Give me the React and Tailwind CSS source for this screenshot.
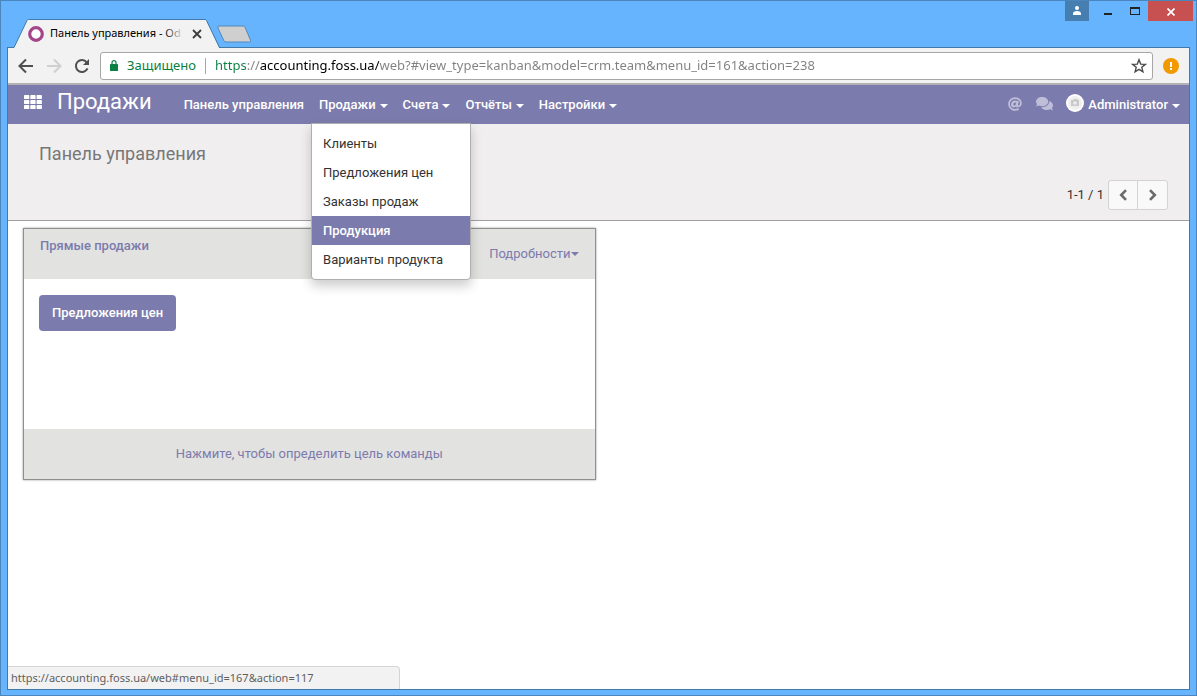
import { useState } from "react";
import clsx from "clsx";
import { FaAt, FaComments } from "react-icons/fa";

const PAGE_URL = "https://accounting.foss.ua/web?#view_type=kanban&model=crm.team&menu_id=161&action=238";

const MENUS = [
  { id: "dashboard", label: "Панель управления" },
  {
    id: "sales",
    label: "Продажи",
    items: ["Клиенты", "Предложения цен", "Заказы продаж", "Продукция", "Варианты продукта"],
  },
  { id: "invoices", label: "Счета", items: [] },
  { id: "reports", label: "Отчёты", items: [] },
  { id: "settings", label: "Настройки", items: [] },
];

function Caret({ className }) {
  return (
    <svg viewBox="0 0 8 4" className={clsx("h-1 w-2 shrink-0", className)} fill="currentColor" aria-hidden="true">
      <path d="M0 0h8L4 4z" />
    </svg>
  );
}

function BrowserTab() {
  return (
    <div className="relative z-10 -mb-px flex h-[29px] w-[206px] items-center pl-3.5 pr-[18px]">
      <svg viewBox="0 0 206 29" className="absolute inset-0 h-full w-full" aria-hidden="true">
        <path d="M0 29V28.5L13 1.5Q13.500 .5 14.500 .5H191Q192 .5 192.500 1.500L205 28.500V29z" fill="#f2f2f2" />
        <path d="M0 28.500L13 1.500Q13.500 .5 14.500 .5H191Q192 .5 192.500 1.500L205.500 28.500" fill="none" stroke="#4179a8" />
      </svg>
      <svg viewBox="0 0 16 16" className="relative h-4 w-4 shrink-0" aria-hidden="true">
        <circle cx="8" cy="8" r="6.300" fill="#fff" stroke="#a24689" strokeWidth="3.200" />
      </svg>
      <span className="relative ml-1.5 w-[134px] whitespace-nowrap text-[11px] text-black">
        Панель управления - Od
        <span className="absolute inset-y-0 right-0 w-5 bg-linear-to-r from-transparent to-[#f2f2f2]" />
      </span>
      <button type="button" aria-label="Закрыть вкладку" className="relative ml-2 text-[#3c3c3c]">
        <svg viewBox="0 0 10 10" className="h-2.5 w-2.5" stroke="currentColor" strokeWidth="1.8">
          <path d="M1 1l8 8M9 1L1 9" />
        </svg>
      </button>
    </div>
  );
}

function WindowButtons() {
  return (
    <div className="ml-auto flex h-5 self-start">
      <button type="button" aria-label="Профиль" className="flex w-6 justify-center bg-[#477eb0] pt-[5px]">
        <svg viewBox="0 0 8 9" className="h-[9px] w-2" fill="#fff">
          <circle cx="4" cy="2" r="2" />
          <path d="M0 9V7.500Q0 5 4 5T8 7.500V9z" />
        </svg>
      </button>
      <button type="button" aria-label="Свернуть" className="flex w-[38px] items-center justify-center pt-1.5">
        <span className="h-0.5 w-2 bg-[#222]" />
      </button>
      <button type="button" aria-label="Развернуть" className="flex w-[13px] items-center justify-end">
        <span className="h-2 w-[10px] border border-t-2 border-[#222]" />
      </button>
      <button type="button" aria-label="Закрыть" className="ml-2 flex w-[45px] items-center justify-center bg-[#c75050]">
        <svg viewBox="0 0 8 8" className="mt-0.5 h-2 w-2" stroke="#fff" strokeWidth="1.7">
          <path d="M.5 .5l7 7M7.500 .5l-7 7" />
        </svg>
      </button>
    </div>
  );
}

function AddressBar() {
  return (
    <div className="flex h-[35px] shrink-0 items-center bg-[#f2f2f2] pl-2.5 pr-2.5">
      <button type="button" aria-label="Назад" className="text-[#4f4f52]">
        <svg viewBox="0 0 16 16" className="h-4 w-4" fill="none" stroke="currentColor" strokeWidth="2">
          <path d="M15 8H2M8 1.500L1.500 8L8 14.500" />
        </svg>
      </button>
      <button type="button" aria-label="Вперёд" className="ml-3 text-[#cfcfcf]">
        <svg viewBox="0 0 16 16" className="h-4 w-4" fill="none" stroke="currentColor" strokeWidth="2">
          <path d="M1 8h13M8 1.500L14.500 8L8 14.500" />
        </svg>
      </button>
      <button type="button" aria-label="Обновить" className="ml-3 text-[#4f4f52]">
        <svg viewBox="0 0 16 16" className="h-4 w-4" fill="none" stroke="currentColor" strokeWidth="2">
          <path d="M13.500 10.300A6 6 0 1 1 12.700 4.300" />
          <path d="M15 1v6H9z" fill="currentColor" stroke="none" />
        </svg>
      </button>
      <div className="ml-2.5 flex h-7 min-w-0 flex-1 items-center rounded-[3px] border border-[#a6a6a6] bg-white pl-[9px] pr-[5px] text-[13px]">
        <svg viewBox="0 0 8 11" className="h-[11px] w-2" aria-hidden="true">
          <path d="M2 5V2.700a2 2 0 0 1 4 0V5" fill="none" stroke="#0b8043" strokeWidth="1.200" />
          <rect y="4" width="8" height="7" rx=".6" fill="#0b8043" />
        </svg>
        <span className="ml-[9px] text-[#0b8043]">Защищено</span>
        <span className="ml-[9px] h-4 w-px bg-[#a6a6a6]" />
        <input
          type="text"
          aria-label="Адрес"
          defaultValue={PAGE_URL}
          className="ml-[9px] min-w-0 flex-1 bg-[linear-gradient(to_right,#0b8043_31px,#808080_31px,#808080_45px,#000_45px,#000_164px,#808080_164px)] bg-clip-text text-transparent outline-none"
        />
        <button type="button" aria-label="Добавить в закладки">
          <svg viewBox="0 0 16 16" className="h-4 w-4" fill="none" stroke="#4a4a4a" strokeWidth="1.400">
            <path d="M8 1.800l1.700 4.300 4.600.3-3.500 2.900 1.100 4.500L8 11.300l-3.900 2.500 1.100-4.500L1.700 6.400l4.600-.3z" />
          </svg>
        </button>
      </div>
      <button type="button" aria-label="Меню браузера" className="ml-2.5">
        <svg viewBox="0 0 16 16" className="h-4 w-4">
          <circle cx="8" cy="8" r="8" fill="#f29900" />
          <path d="M7 4h2v5H7zM7 10h2v2H7z" fill="#fff" />
        </svg>
      </button>
    </div>
  );
}

function NavMenu({ menu, open, onToggle }) {
  const [active, setActive] = useState("Продукция");

  return (
    <li className="relative">
      <button type="button" onClick={onToggle} className="flex h-[39px] items-center font-medium text-white">
        {menu.label}
        {menu.items && <Caret className="ml-1 mt-[3px]" />}
      </button>
      {open && (
        <ul className="absolute -left-2 top-full z-20 -mt-px w-40 rounded-b border border-[#afafaf] bg-white py-[5px] shadow-[0_6px_12px_rgba(0,0,0,0.2)]">
          {menu.items.map((item) => (
            <li key={item}>
              <a
                href="#"
                onMouseEnter={() => setActive(item)}
                className={clsx(
                  "block whitespace-nowrap px-[11px] leading-[29px]",
                  active === item ? "bg-[#7c7bad] font-medium text-white" : "text-[#333]"
                )}
              >
                {item}
              </a>
            </li>
          ))}
        </ul>
      )}
    </li>
  );
}

function Navbar() {
  const [openMenu, setOpenMenu] = useState("sales");

  return (
    <nav className="flex h-[39px] shrink-0 items-center bg-[#7c7bad] pl-4 pr-[9px] text-white">
      <button type="button" aria-label="Приложения" className="-mt-1.5">
        <svg viewBox="0 0 18 14" className="h-3.5 w-[18px]" fill="currentColor">
          {[0, 5, 10].map((y) =>
            [0, 6.3, 12.6].map((x) => <rect key={`${x}-${y}`} x={x} y={y} width="5.3" height="4.1" rx=".7" />)
          )}
        </svg>
      </button>
      <span className="-mt-1.5 ml-[15px] text-[22px]">Продажи</span>
      <ul className="ml-8 flex gap-[15px]">
        {MENUS.map((menu) => (
          <NavMenu
            key={menu.id}
            menu={menu}
            open={openMenu === menu.id && menu.items?.length > 0}
            onToggle={() => setOpenMenu(openMenu === menu.id ? null : menu.id)}
          />
        ))}
      </ul>
      <div className="ml-auto flex items-center">
        <button type="button" aria-label="Упоминания" className="-mt-0.5 text-[#bfbed9]">
          <FaAt className="h-3.5 w-3.5" />
        </button>
        <button type="button" aria-label="Сообщения" className="-mt-0.5 ml-3.5 text-[#bfbed9]">
          <FaComments className="h-[17px] w-[17px]" />
        </button>
        <button type="button" className="ml-[13px] flex items-center font-medium">
          <svg viewBox="0 0 18 18" className="-mt-1 h-[18px] w-[18px]" aria-hidden="true">
            <circle cx="9" cy="9" r="9" fill="#fff" />
            <circle cx="9" cy="9" r="7" fill="#efefef" />
            <path d="M5 6h2l1-1h3l1 1h1v6H5z" fill="#c9c9c9" />
            <circle cx="9" cy="9" r="1.800" fill="#efefef" />
          </svg>
          <span className="ml-1">Administrator</span>
          <Caret className="ml-1 mt-[3px]" />
        </button>
      </div>
    </nav>
  );
}

function PagerButton({ label, path, className }) {
  return (
    <button
      type="button"
      aria-label={label}
      className={clsx("flex h-[30px] items-center justify-center border border-[#d3d3d3] bg-[#f9f9f9]", className)}
    >
      <svg viewBox="0 0 8 12" className="h-3 w-2" fill="none" stroke="#6b6b6b" strokeWidth="2.600">
        <path d={path} />
      </svg>
    </button>
  );
}

function ControlPanel() {
  return (
    <header className="flex h-[97px] shrink-0 flex-col justify-between border-b border-[#a0a0a0] bg-[#f0eeee] pb-2.5 pl-[31px] pr-[21px] pt-4">
      <h1 className="text-[18px] leading-7 text-[#777]">Панель управления</h1>
      <div className="flex items-center justify-end text-[#333]">
        <span className="mr-1">1-1 / 1</span>
        <PagerButton label="Предыдущая" path="M7 1.200L2.200 6L7 10.800" className="w-[30px] rounded-l-[3px]" />
        <PagerButton label="Следующая" path="M1 1.200L5.800 6L1 10.800" className="-ml-px w-[31px] rounded-r-[3px]" />
      </div>
    </header>
  );
}

function TeamCard() {
  return (
    <article className="border border-[#8f8f8f] text-[#7c7bad] shadow-[0_0_2px_rgba(0,0,0,0.4)]">
      <div className="flex h-[50px] justify-between bg-[#e2e2e0] px-4">
        <h2 className="pt-[7px] font-medium leading-5">Прямые продажи</h2>
        <button type="button" className="flex items-center">
          Подробности
          <Caret />
        </button>
      </div>
      <div className="h-[150px] bg-white px-[15px] pt-4">
        <button type="button" className="h-9 rounded bg-[#7c7bad] px-[13px] font-medium text-white">
          Предложения цен
        </button>
      </div>
      <a href="#" className="flex h-[50px] items-center justify-center bg-[#e2e2e0]">
        Нажмите, чтобы определить цель команды
      </a>
    </article>
  );
}

export default function App() {
  return (
    <div className="flex h-screen flex-col border border-[#4a85bd] bg-[#66b3fe] px-1.5 pb-[5px] font-['Noto_Sans',sans-serif]">
      <div className="-mr-[3px] flex h-[46px] shrink-0 items-end pl-[7px]">
        <BrowserTab />
        <svg viewBox="0 0 36 18" className="-ml-1 mb-1 h-[18px] w-9" aria-hidden="true">
          <path
            d="M3 1h24q1.500 0 2 1.200l5.500 13q.5 1.800-1 1.800H10q-1.500 0-2.200-1.500L2 3Q1.300 1 3 1z"
            fill="#cfcfcf"
            stroke="#5389b8"
          />
        </svg>
        <WindowButtons />
      </div>
      <div className="relative flex min-h-0 flex-1 flex-col border border-[#4179a8] bg-white">
        <AddressBar />
        <div className="flex min-h-0 flex-1 flex-col border-t-2 border-[#b3b1b3] font-['Roboto',sans-serif] text-[13px]">
          <Navbar />
          <ControlPanel />
          <main className="grid grid-cols-2 gap-1.5 px-[15px] pt-[7px]">
            <TeamCard />
          </main>
        </div>
        <div className="absolute bottom-0 left-0 h-[23px] w-[392px] rounded-tr border-r border-t border-[#d5d5d5] bg-[#f2f2f2] pl-[3px] text-[11px] leading-[22px] text-[#5f5f5f]">
          https://accounting.foss.ua/web#menu_id=167&amp;action=117
        </div>
      </div>
    </div>
  );
}
